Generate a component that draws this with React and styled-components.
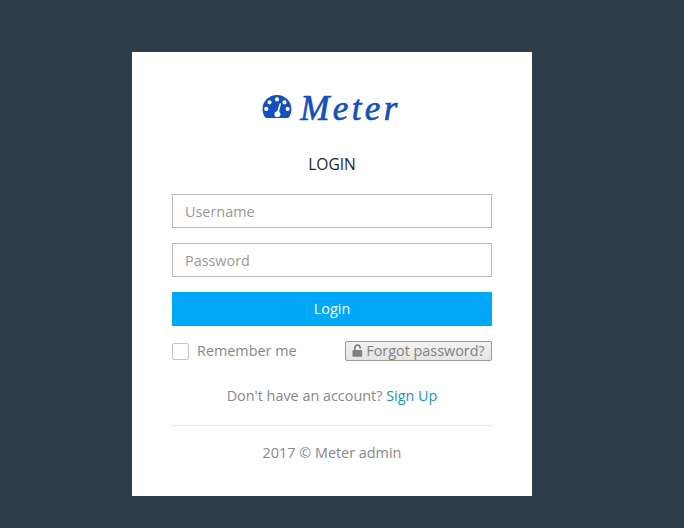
import React from 'react'
import styled, { createGlobalStyle } from 'styled-components'

const Global = createGlobalStyle`
  html, body { margin: 0; height: 100%; }
  body { background: #2c3c49; font-family: "Open Sans", sans-serif; }
  input::placeholder { color: #999; opacity: 1; }
`
const Page = styled.div`
  min-height: 528px; display: flex; justify-content: center; align-items: flex-start;
  padding: 52px 20px 0 0; box-sizing: border-box;
`
const Card = styled.form`
  width: 400px; height: 444px; box-sizing: border-box; background: #fff;
  padding: 40px 40px 0; display: flex; flex-direction: column;
`
const Logo = styled.div`
  display: flex; justify-content: center; align-items: center; gap: 8px; height: 32px;
  color: #1650bd; padding-right: 1px;
`
const GaugeIcon = styled.svg`
  display: block; margin-bottom: 4px; flex: none;
`
const LogoText = styled.span`
  font-family: "Liberation Serif", serif; font-style: italic; font-size: 35px; line-height: 32px;
  letter-spacing: 3.4px; -webkit-text-stroke: 0.7px #1650bd; padding-top: 2px;
`
const Title = styled.h3`
  margin: 30px 0 20px; font-size: 15.6px; line-height: 20px; font-weight: 500; color: #1c2733; text-align: center;
`
const Input = styled.input`
  display: block; width: 100%; height: 34px; box-sizing: border-box; padding: 0 12px;
  border: 1px solid #bdbdbd; background: #fff; font: 14.4px "Open Sans", sans-serif; color: #555;
  margin-bottom: 15px; outline: none;
`
const Submit = styled.button`
  height: 34px; width: 100%; border: 0; background: #00a8f7; color: #fff;
  font: 14.4px "Open Sans", sans-serif; padding: 0 0 2px;
`
const Options = styled.div`
  display: flex; align-items: center; justify-content: space-between; margin-top: 15px; height: 20px;
`
const Remember = styled.label`
  display: flex; align-items: center; gap: 8px; font-size: 14.4px; color: #888; padding-bottom: 2px;
`
const Box = styled.span`
  width: 15px; height: 15px; border: 1px solid #c4c4c4; border-radius: 2px; display: block; margin-top: 2px;
`
const Forgot = styled.button`
  height: 20px; width: 147px; box-sizing: border-box; padding: 0 0 2px; border: 1px solid #999; border-radius: 2px;
  background: linear-gradient(#f2f2f2, #e4e4e4); color: #808080; font: 14.4px "Open Sans", sans-serif;
  display: flex; align-items: center; justify-content: center; gap: 3px;
`
const LockIcon = styled.svg`
  display: block; flex: none;
`
const Signup = styled.p`
  margin: 25px 0 0; text-align: center; font-size: 14.4px; line-height: 20px; color: #888;
`
const SignLink = styled.a`
  color: #1a8fc9; text-decoration: none;
`
const Footer = styled.div`
  margin-top: 19px; border-top: 1px solid #e6e6e6; padding-top: 17px; text-align: center;
  font-size: 14.4px; line-height: 20px; color: #888;
`

function Gauge() {
  return (
    <GaugeIcon width="30" height="25" viewBox="0 0 30 25">
      <path
        fill="currentColor"
        fillRule="evenodd"
        d="M15 1C7 1 .5 7.300.5 15c0 3.200 1 6.200 2.800 8.600.3.300.6.400 1 .4h21.400c.4 0 .7-.1 1-.4 1.800-2.400 2.800-5.400 2.800-8.600C29.500 7.300 23 1 15 1zM15 3.300a2.100 2.100 0 1 1 0 4.200 2.100 2.100 0 0 1 0-4.200zM7.500 6.200a2.100 2.100 0 1 1 0 4.200 2.100 2.100 0 0 1 0-4.200zM22.500 6.200a2.100 2.100 0 1 1 0 4.200 2.100 2.100 0 0 1 0-4.200zM4.300 12.800a2.100 2.100 0 1 1 0 4.200 2.100 2.100 0 0 1 0-4.200zM25.700 12.800a2.100 2.100 0 1 1 0 4.200 2.100 2.100 0 0 1 0-4.200zM17.800 9.200l1.300.4-2 8c.9.600 1.400 1.600 1.400 2.600 0 1.700-1.400 3-3.100 3s-3-1.300-3-3c0-1.600 1.200-2.900 2.800-3z"
      />
    </GaugeIcon>
  )
}

function Lock() {
  return (
    <LockIcon width="11" height="13" viewBox="0 0 11 13">
      <path
        fill="currentColor"
        d="M1 6h1V3.800C2 1.700 3.500.2 5.500.2S9 1.700 9 3.800v.6H7.300v-.6c0-1.100-.8-1.900-1.800-1.900s-1.800.8-1.800 1.900V6h6c.3 0 .5.200.5.500v5.800c0 .3-.2.500-.5.500H1c-.3 0-.5-.2-.5-.5V6.500C.5 6.200.7 6 1 6z"
      />
    </LockIcon>
  )
}

export default function App() {
  return (
    <Page>
      <Global />
      <Card>
        <Logo>
          <Gauge />
          <LogoText>Meter</LogoText>
        </Logo>
        <Title>LOGIN</Title>
        <Input placeholder="Username" />
        <Input placeholder="Password" type="password" />
        <Submit type="button">Login</Submit>
        <Options>
          <Remember><Box />Remember me</Remember>
          <Forgot type="button"><Lock />Forgot password?</Forgot>
        </Options>
        <Signup>Don't have an account? <SignLink href="#">Sign Up</SignLink></Signup>
        <Footer>2017 © Meter admin</Footer>
      </Card>
    </Page>
  )
}
